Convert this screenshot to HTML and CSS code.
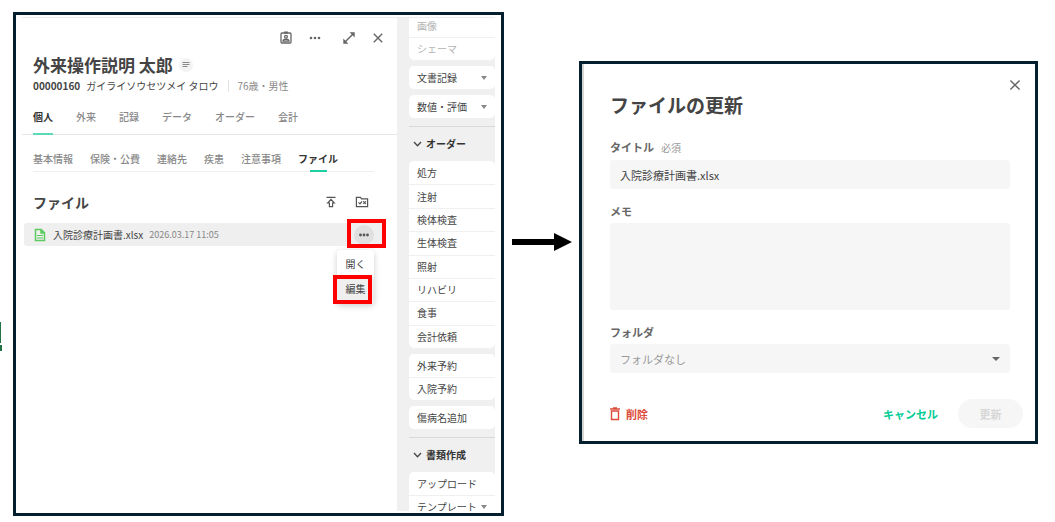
FILE: index.html
```html
<!DOCTYPE html>
<html lang="ja">
<head>
<meta charset="utf-8">
<title>ファイルの更新</title>
<meta name="viewport" content="width=device-width, initial-scale=1">
<link rel="stylesheet" href="styles.css">
</head>
<body>
<span class="edge-mark edge-mark-tall"></span>
<span class="edge-mark edge-mark-short"></span>
<main class="guide">
  <section class="frame patient-frame">
    <div class="patient">
      <div class="toolbar">
        <button class="icon-btn" aria-label="患者情報"><svg width="14" height="14" viewBox="0 0 14 14" fill="none" stroke="#666" stroke-width="1.3"><rect x="2" y="2" width="10" height="10" rx="1"/><path d="M5 1.5h4" stroke-width="2"/><circle cx="7" cy="5.8" r="1.4"/><path d="M4 10.2c0-2.6 6-2.6 6 0z"/></svg></button>
        <button class="icon-btn" aria-label="その他"><svg width="14" height="14" viewBox="0 0 14 14" fill="#666"><circle cx="3" cy="7" r="1.3"/><circle cx="7" cy="7" r="1.3"/><circle cx="11" cy="7" r="1.3"/></svg></button>
        <button class="icon-btn icon-btn-wide" aria-label="拡大"><svg width="14" height="14" viewBox="0 0 14 14" fill="#666"><path d="M7.6 1.3h5.1v5.1zM1.3 7.6v5.1h5.1z"/><path d="M3 11l8-8" stroke="#666" stroke-width="1.4"/></svg></button>
        <button class="icon-btn" aria-label="閉じる"><svg width="14" height="14" viewBox="0 0 14 14" stroke="#666" stroke-width="1.4"><path d="M2.8 2.8l8.4 8.4M11.2 2.8l-8.4 8.4"/></svg></button>
      </div>
      <div class="name-row">
        <h1 class="name">外来操作説明 太郎</h1>
        <button class="note-btn" aria-label="メモ"><svg width="14" height="14" viewBox="0 0 14 14" stroke="#888" stroke-width="1"><path d="M3.5 4.5h7M3.5 6.5h7M3.5 8.5h5"/></svg></button>
      </div>
      <div class="meta">
        <strong class="meta-id">00000160</strong>
        <span class="meta-kana">ガイライソウセツメイ タロウ</span>
        <span class="meta-age">76歳・男性</span>
      </div>
      <nav class="tabs">
        <a class="tab tab-active" href="#kojin">個人</a>
        <a class="tab" href="#gairai">外来</a>
        <a class="tab" href="#kiroku">記録</a>
        <a class="tab" href="#data">データ</a>
        <a class="tab" href="#order">オーダー</a>
        <a class="tab" href="#kaikei">会計</a>
      </nav>
      <nav class="subtabs">
        <a class="subtab" href="#kihon">基本情報</a>
        <a class="subtab" href="#hoken">保険・公費</a>
        <a class="subtab" href="#renraku">連絡先</a>
        <a class="subtab" href="#shikkan">疾患</a>
        <a class="subtab" href="#chui">注意事項</a>
        <a class="subtab subtab-active" href="#file">ファイル</a>
      </nav>
      <div class="files-head">
        <h2 class="files-title">ファイル</h2>
        <button class="icon-btn" aria-label="アップロード"><svg width="14" height="14" viewBox="0 0 14 14" fill="none" stroke="#555" stroke-width="1.2"><path d="M2.5 2.4h9M7 4.4l3.3 3.6H8.6v3.6H5.4V8H3.7z"/></svg></button>
        <button class="icon-btn" aria-label="フォルダ管理"><svg width="14" height="14" viewBox="0 0 14 14" fill="none" stroke="#555" stroke-width="1.2"><path d="M1.4 2.4h4l1.2 1.5h6v7.7H1.4z"/><path d="M3.5 7.4l1.5 1.5 2-2.6M8.3 6.3l2.6 2.6M10.9 6.3L8.3 8.9"/></svg></button>
      </div>
      <div class="file-row">
        <svg width="12" height="14" viewBox="0 0 12 14" fill="none" stroke="#5ccb5f" stroke-width="1.5"><path d="M1.5 1.5h5.7l3.3 3.3v7.7h-9z"/><path d="M7 1.5v3.6h3.5" fill="#5ccb5f"/><path d="M3 7.5h6M3 10h6" stroke-width="1.2"/></svg>
        <a class="file-name" href="#open">入院診療計画書.xlsx</a>
        <time class="file-date">2026.03.17 11:05</time>
        <span class="more-wrap">
          <button class="more-btn" aria-label="ファイルのメニュー"><svg width="12" height="12" viewBox="0 0 12 12" fill="#555"><circle cx="2.5" cy="6" r="1.4"/><circle cx="6" cy="6" r="1.4"/><circle cx="9.5" cy="6" r="1.4"/></svg></button>
          <span class="mark mark-more"></span>
          <span class="menu">
            <button class="menu-item">開く</button>
            <button class="menu-item menu-item-hover">編集</button>
            <span class="mark mark-edit"></span>
          </span>
        </span>
      </div>
    </div>
    <aside class="side">
      <div class="side-card side-card-cut">
        <button class="side-item" disabled>画像</button>
        <button class="side-item" disabled>シェーマ</button>
      </div>
      <div class="side-card"><button class="side-item">文書記録<span class="caret"></span></button></div>
      <div class="side-card"><button class="side-item">数値・評価<span class="caret"></span></button></div>
      <h3 class="side-head"><svg width="9" height="6" viewBox="0 0 9 6" fill="none" stroke="#444" stroke-width="1.3"><path d="M1 1l3.5 3.7L8 1"/></svg>オーダー</h3>
      <div class="side-card side-card-orders">
        <button class="side-item">処方</button>
        <button class="side-item">注射</button>
        <button class="side-item">検体検査</button>
        <button class="side-item">生体検査</button>
        <button class="side-item">照射</button>
        <button class="side-item">リハビリ</button>
        <button class="side-item">食事</button>
        <button class="side-item">会計依頼</button>
      </div>
      <div class="side-card">
        <button class="side-item">外来予約</button>
        <button class="side-item">入院予約</button>
      </div>
      <div class="side-card"><button class="side-item">傷病名追加</button></div>
      <h3 class="side-head"><svg width="9" height="6" viewBox="0 0 9 6" fill="none" stroke="#444" stroke-width="1.3"><path d="M1 1l3.5 3.7L8 1"/></svg>書類作成</h3>
      <div class="side-card">
        <button class="side-item">アップロード</button>
        <button class="side-item">テンプレート<span class="caret"></span></button>
      </div>
    </aside>
  </section>

  <svg class="arrow" width="61" height="18" viewBox="0 0 61 18"><path d="M1 6h42V0l18 9-18 9v-6H1z" fill="#000"/></svg>

  <form class="frame dialog">
    <button type="button" class="icon-btn dialog-close" aria-label="閉じる"><svg width="14" height="14" viewBox="0 0 14 14" stroke="#666" stroke-width="1.4"><path d="M2.4 2.4l9.2 9.2M11.6 2.4l-9.2 9.2"/></svg></button>
    <h2 class="dialog-title">ファイルの更新</h2>
    <div class="field">
      <label class="label" for="title">タイトル<span class="required">必須</span></label>
      <input class="control" id="title" type="text" value="入院診療計画書.xlsx">
    </div>
    <div class="field">
      <label class="label" for="memo">メモ</label>
      <textarea class="control control-memo" id="memo"></textarea>
    </div>
    <div class="field">
      <label class="label" for="folder">フォルダ</label>
      <div class="select-wrap">
        <select class="control control-select" id="folder"><option>フォルダなし</option></select>
      </div>
    </div>
    <div class="actions">
      <button type="button" class="action action-delete"><svg width="10" height="14" viewBox="0 0 10 14" fill="none" stroke="#dc4a38" stroke-width="1.4"><path d="M0 2h10M3 1h4M1.5 4h7v8.5h-7z"/></svg>削除</button>
      <button type="button" class="action action-cancel">キャンセル</button>
      <button type="submit" class="action action-submit" disabled>更新</button>
    </div>
  </form>
</main>
</body>
</html>
```

FILE: styles.css
```css
* {
  box-sizing: border-box;
}

body {
  margin: 0;
  background: #fff;
  color: #444;
  font-family: "Noto Sans CJK JP", "Noto Sans", sans-serif;
  font-size: 10px;
  line-height: 16px;
}

button,
input,
select,
textarea {
  margin: 0;
  padding: 0;
  border: 0;
  background: none;
  color: inherit;
  font: inherit;
}

a {
  color: inherit;
  text-decoration: none;
}

h1,
h2,
h3 {
  margin: 0;
}

svg {
  display: block;
  flex: none;
}

.guide {
  display: grid;
  grid-template-columns: 491fr 61px 459fr;
  gap: 7px;
  align-items: start;
  padding: 12px 17px 6px 13px;
}

.frame {
  min-width: 0;
  border: 3px solid #04202f;
  background: #fff;
}

.edge-mark {
  position: absolute;
  left: 0;
  background: #217346;
}

.edge-mark-tall {
  top: 322px;
  width: 1px;
  height: 21px;
}

.edge-mark-short {
  top: 345px;
  width: 2px;
  height: 6px;
}

/* Patient panel */

.patient-frame {
  display: flex;
  padding: 2px 6px 2px 6px;
}

.patient {
  flex: 1;
  min-width: 0;
  border-top: 1px solid #ececee;
}

.icon-btn {
  display: grid;
  place-items: center;
  width: 14px;
  height: 14px;
}

.toolbar {
  display: flex;
  justify-content: flex-end;
  gap: 15px;
  padding: 13px 12px 0 0;
}

.icon-btn-wide {
  margin-left: 5px;
}

.name-row {
  display: flex;
  align-items: center;
  gap: 6px;
  padding: 8px 0 0 11px;
}

.name {
  font-size: 17px;
  line-height: 24px;
}

.note-btn {
  display: grid;
  place-items: center;
  width: 14px;
  height: 14px;
  border-radius: 50%;
  background: #f3f3f3;
}

.meta {
  display: flex;
  align-items: center;
  gap: 6px;
  padding: 1px 0 0 11px;
}

.meta-age {
  margin-left: 4px;
  padding-left: 8px;
  border-left: 1px solid #e4e4e4;
  color: #888;
  line-height: 12px;
}

.tabs {
  display: flex;
  gap: 23px;
  padding: 15px 0 0 11px;
  border-bottom: 1px solid #e6e6e6;
}

.tab {
  margin-bottom: -1px;
  padding-bottom: 8px;
  border-bottom: 2px solid transparent;
  color: #888;
  font-weight: 500;
}

.tab-active {
  border-color: #5cd9b8;
  color: #333;
  font-weight: 700;
}

.subtabs {
  display: flex;
  gap: 17px;
  margin: 16px 23px 0 11px;
  border-bottom: 1px solid #efefef;
}

.subtab {
  display: grid;
  justify-items: center;
  padding-bottom: 4px;
  color: #888;
  font-weight: 500;
}

.subtab-active {
  margin-bottom: -1px;
  padding-bottom: 0;
  color: #333;
  font-weight: 700;
}

.subtab-active::after {
  content: "";
  width: 17px;
  height: 2px;
  margin-top: 3px;
  background: #1fd0a0;
}

.files-head {
  display: flex;
  align-items: center;
  gap: 17px;
  padding: 19px 28px 0 11px;
}

.files-title {
  flex: 1;
  font-size: 14px;
  line-height: 22px;
}

.file-row {
  display: flex;
  align-items: center;
  height: 23px;
  margin: 10px 15px 0 2px;
  padding: 0 8px 0 10px;
  border-radius: 3px;
  background: #efefef;
}

.file-name {
  margin-left: 7px;
}

.file-date {
  flex: 1;
  margin-left: 6px;
  color: #888;
  font-size: 9px;
}

.more-wrap {
  position: relative;
}

.more-btn {
  display: grid;
  place-items: center;
  width: 20px;
  height: 20px;
  border-radius: 50%;
  background: #e0e0e0;
}

/* Red rectangles that point out what to click */
.mark {
  position: absolute;
  width: 39px;
  height: 29px;
  border: 4px solid #f00;
  pointer-events: none;
}

.mark-more {
  top: -6px;
  left: -7px;
}

.menu {
  position: absolute;
  top: 25px;
  right: 0;
  display: grid;
  width: 37px;
  padding: 2px 0;
  border-radius: 4px;
  background: #fff;
  box-shadow: 0 2px 6px rgba(0, 0, 0, 0.2);
}

.menu-item {
  height: 25px;
  text-align: center;
}

.menu-item-hover {
  background: #efefef;
}

.mark-edit {
  top: 25px;
  left: -4px;
}

/* Order sidebar */

.side {
  width: 98px;
  height: 494px;
  padding: 0 0 0 12px;
  overflow: hidden;
  background: #f0f0f0;
  border-top: 1px solid #ececee;
}

.side-card {
  display: grid;
  grid-auto-rows: 1fr;
  margin-bottom: 6px;
  border-radius: 5px;
  background: #fff;
}

.side-card-cut {
  margin-top: -4px;
}

.side-card-orders {
  min-height: 187px;
}

.side-item {
  display: flex;
  align-items: center;
  justify-content: space-between;
  min-height: 23px;
  padding: 0 8px;
  line-height: 10px;
  text-align: left;
  white-space: nowrap;
}

.side-item + .side-item {
  border-top: 1px solid #f0f0f0;
}

.side-item:disabled {
  color: #b4b4b4;
}

.caret {
  width: 0;
  border: 3px solid transparent;
  border-top: 4px solid #888;
  border-bottom: 0;
}

.side-head {
  display: flex;
  align-items: center;
  gap: 4px;
  margin-top: 8px;
  padding: 9px 0 9px 4px;
  border-top: 1px solid #d9d9d9;
  color: #333;
  font-size: 10px;
}

/* Arrow between the two steps */

.arrow {
  margin-top: 221px;
}

/* Update dialog */

.dialog {
  position: relative;
  display: flex;
  flex-direction: column;
  gap: 14px;
  margin-top: 49px;
  padding: 27px 25px 13px 28px;
  font-size: 11px;
  box-shadow: inset 2px 0 #d5d5d5;
}

.dialog-close {
  position: absolute;
  top: 14px;
  right: 13px;
}

.dialog-title {
  margin-bottom: 6px;
  font-size: 19px;
  line-height: 28px;
}

.field {
  display: grid;
  gap: 4px;
}

.label {
  color: #666;
  font-weight: 700;
}

.required {
  margin-left: 7px;
  color: #999;
  font-size: 10px;
  font-weight: 400;
}

.control {
  display: block;
  width: 100%;
  height: 29px;
  padding: 0 10px;
  border-radius: 3px;
  background: #f6f6f6;
}

.control-memo {
  height: 87px;
  padding: 6px 10px;
  resize: none;
}

.select-wrap {
  position: relative;
}

.select-wrap::after {
  content: "";
  position: absolute;
  top: 13px;
  right: 10px;
  border: 4px solid transparent;
  border-top-color: #666;
  border-bottom: 0;
  pointer-events: none;
}

.control-select {
  appearance: none;
  color: #999;
}

.actions {
  display: flex;
  align-items: center;
  margin: 12px -13px 0 0;
}

.action {
  display: flex;
  align-items: center;
  font-weight: 700;
}

.action-delete {
  gap: 6px;
  margin-right: auto;
  color: #dc4a38;
}

.action-cancel {
  color: #00cc96;
}

.action-submit {
  justify-content: center;
  width: 65px;
  height: 29px;
  margin-left: 20px;
  border-radius: 15px;
  background: #f6f6f6;
  color: #d6d6d6;
}
```
